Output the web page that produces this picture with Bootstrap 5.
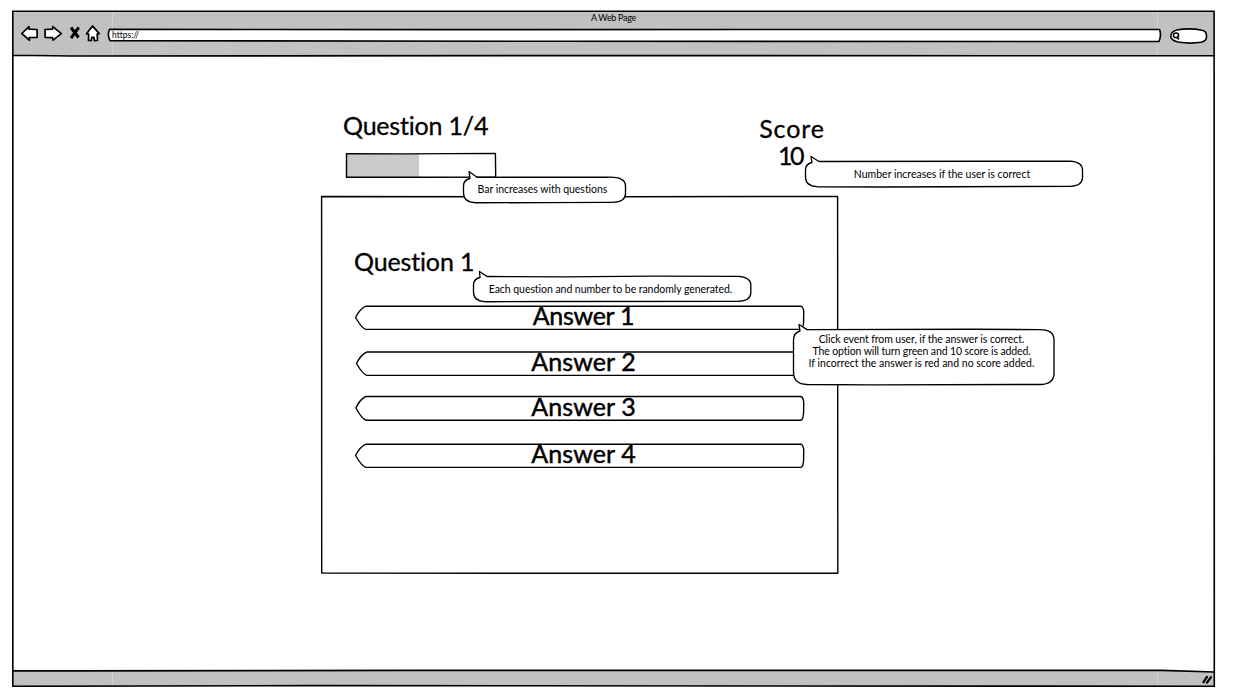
<!DOCTYPE html>
<html lang="en">
<head>
<meta charset="utf-8">
<meta name="viewport" content="width=device-width, initial-scale=1">
<title>A Web Page</title>
<link href="https://cdn.jsdelivr.net/npm/bootstrap@5.3.0/dist/css/bootstrap.min.css" rel="stylesheet">
<style>
body{font-family:Lato,"Open Sans",sans-serif;color:#000;background:#fff;overflow:hidden;font-variant-ligatures:none}
.browser{width:1203px;height:676px;margin:11px 0 0 12px}
.outline{position:absolute;left:0;top:0;overflow:visible;fill:none;stroke:#000;stroke-width:1.6;stroke-linejoin:round;stroke-linecap:round}
.fillw{fill:#fff}
.chrome-bar{height:45px}
.page-title{font-size:9px;line-height:14px;height:14px;letter-spacing:-.3px}
.tools{height:31px;padding:0 7px 0 9px}
.address{width:1054px;height:14px;font-size:8.5px;line-height:14px;padding-left:4px;margin:3px 0 0 7px}
.search{margin-top:2px}
.page-body{height:614px;padding:0 376px 0 309px}
.status{height:17px}
.quiz-head{height:140px}
.progress-side{padding:56px 0 0 22px}
.score-side{width:66px;margin-right:14px;padding-top:59px}
.big{font-size:25px;line-height:26px;white-space:nowrap;-webkit-text-stroke:.3px #000}
.q-count{letter-spacing:-.2px;height:28px}
.q-title{letter-spacing:-.15px;line-height:28px}
.score{letter-spacing:.9px;height:27px}
.score10{letter-spacing:-2.6px;padding-right:4px}
.bar-track{width:150px;height:25px;margin:13px 0 0 3px}
.panel{height:378px;width:517px;padding:51px 33px 0}
.answers{margin-top:30px}
.answer{width:449px;height:25px;font-size:25px;line-height:20px;margin-left:1px}
.answer>span{position:relative;left:4px;letter-spacing:.1px;-webkit-text-stroke:.45px #000}
.answer:first-child>span{letter-spacing:-.3px}
.note{position:absolute;font-size:10.5px;line-height:12px;text-align:center;white-space:nowrap;z-index:3}
.note>span{position:relative;display:block}
.note .outline{stroke-width:1.35;fill:#fff}
.n1{letter-spacing:-.03px}
.n3{letter-spacing:-.05px}
.n4{letter-spacing:-.08px}
.n5{letter-spacing:-.12px}
</style>
</head>
<body>
<div class="browser position-relative d-flex flex-column">
  <svg class="outline" width="1203" height="676">
    <path d="M.8.3H1202.4V45H.8ZM.8 660L60 659.5 1150 659.3 1202.4 661V675.3L300 674.8.8 675.3Z" fill="#c1c1c1" stroke="none"/>
    <path d="M100.5 1V44M1145.5 1V44M100.5 660V674M1145.5 660V674" stroke="#d0d0d0" stroke-width="1"/>
    <path d="M.8.3H1202.1L1202.3 675.3 300 674.6.8 675.3ZM.8 44.3L60 45 500 44.6 1202.4 44.8M.8 659.6L60 659.9 400 659.4 1150 659.4 1202.4 661"/>
  </svg>
  <header class="chrome-bar position-relative">
    <div class="page-title text-center">A Web Page</div>
    <div class="tools d-flex align-items-start">
      <svg width="80" height="22" viewBox="0 0 80 22" fill="#fff" stroke="#000" stroke-width="1.7" stroke-linejoin="round" stroke-linecap="round">
        <path d="M.8 8.5L8 1.6 8 4.2 16 4.5 16.2 12.3 8.3 12.5 8.5 15.3Z"/>
        <path d="M24 4.5L31.5 4.2 31.8 1.6 40.3 8.6 32 15.2 31.5 12.6 24.2 12.4Z"/>
        <path d="M50 2.5L57.5 12.5M57.8 2.3L50 13.2" stroke-width="3" stroke-linecap="butt"/>
        <path d="M71.5.9L78.2 8.6 76.2 9 76.5 15.5 73.4 15.7 73 12.3 70.7 12.3 70.3 15.7 67.5 15.5 67.7 9.2 65.5 8.8Z"/>
      </svg>
      <div class="address position-relative">
        <svg class="outline" width="1054" height="14"><path class="fillw" d="M1.5 1.4L350 1.6 1051.6 1.5Q1053.6 7.5 1051 13.5L450 13.3 2 12.7Q-1 7 1.5 1.4Z"/></svg>
        <span class="position-relative d-block">https://</span>
      </div>
      <svg class="search ms-auto" width="38" height="18" viewBox="0 3 38 18" fill="#fff" stroke="#000" stroke-width="1.6">
        <path d="M8 2.8Q20 .8 32 3.3 36.5 4 36.5 9 37 14 31 15.3 20 17 8 15 .5 13 .8 9 1 4 8 2.8Z" transform="translate(0 3)"/>
        <ellipse cx="6" cy="11.3" rx="2.6" ry="2.4" stroke-width="1.5"/><path d="M7 12.8L9 15.5"/>
      </svg>
    </div>
  </header>

  <main class="page-body position-relative">
    <div class="quiz-head position-relative d-flex justify-content-between">
      <div class="progress-side">
        <div class="big q-count">Question 1/4</div>
        <div class="bar-track position-relative">
          <svg class="outline" width="150" height="25"><path d="M.5 1H73V24H.5Z" fill="#cacaca" stroke="none"/><path stroke-width="1.4" d="M.5.6L60 .9 149.4.4 149.7 24 80 24.2.5 24.2Z"/></svg>
          <div class="note" style="left:117px;top:24px;width:163px;padding-top:6px;padding-right:4px">
            <svg class="outline" width="163" height="26"><path d="M14 .3L110 .2 145 .2Q162.5-.5 162.5 9V17Q162 25 150 25.3L80 25.7 12 25.7Q.5 25 .5 16V9Q.5 3 7 1.5L6-5.5Z"/></svg>
            <span class="n1">Bar increases with questions</span>
          </div>
        </div>
      </div>
      <div class="score-side text-center position-relative">
        <div class="big score">Score</div>
        <div class="big score10">10</div>
        <div class="note" style="left:46px;top:105px;width:278px;padding-top:7px;padding-right:4px">
          <svg class="outline" width="278" height="26"><path d="M14 .5L180 .2 265 .2Q277.5 1 277.5 9V17Q277 25 265 25.3L80 26 12 25.7Q.5 25 .5 16V9Q.5 3 7 1.5L6-4.5Z"/></svg>
          <span>Number increases if the user is correct</span>
        </div>
      </div>
    </div>

    <section class="panel position-relative">
      <svg class="outline" width="517" height="378"><path stroke-width="1.4" d="M.6.5L300 .8 516.6.4 516.8 377.3 250 377.3.7 377Z"/></svg>
      <div class="big position-relative d-inline-block align-top q-title">Question 1</div>
      <div class="note" style="left:152px;top:80px;width:278px;padding-top:7px;padding-right:3px">
        <svg class="outline" width="278" height="26"><path d="M14 .5L90 .9 180 .1 265 .3Q277.8 1 277.8 9V17Q277.5 25 265 25.3L80 25.5 12 25.7Q.5 25 .5 16V9Q.5 3 7 1.5L6.5-4.5Z"/></svg>
        <span class="n3">Each question and number to be randomly generated.</span>
      </div>
      <div class="answers">
        <div class="answer position-relative text-center" style="margin-bottom:21px">
          <svg class="outline" width="449" height="25"><path stroke-width="1.4" d="M11 1.2H446Q449.5 2.7 448.6 12 449 23.7 446 24.4H11Q7 23.7 .6 12.5 5 3.7 11 1.2Z"/></svg>
          <span>Answer 1</span>
          <div class="note" style="left:438px;top:24px;width:261px;padding-top:4px;padding-right:4px">
            <svg class="outline" width="261" height="56"><path d="M14 .6L180 .2 245 .6Q261 0 261 11V45Q260.5 55.2 247 55.5L80 55.8 14 55.5Q.5 55 .5 43V11Q.5 4 7 2L6-4.5Z"/></svg>
            <span class="n4">Click event from user, if the answer is correct.</span>
            <span class="n5">The option will turn green and 10 score is added.</span>
            <span>If incorrect the answer is red and no score added.</span>
          </div>
        </div>
        <div class="answer position-relative text-center" style="margin-bottom:20px">
          <svg class="outline" width="449" height="25"><path stroke-width="1.4" d="M12 1H446Q449.5 2.5 448.6 12 449 23.5 446 24.4H12Q8 23.5 1.4 12.5 6 3.5 12 1Z"/></svg>
          <span>Answer 2</span>
        </div>
        <div class="answer position-relative text-center" style="margin-bottom:22px">
          <svg class="outline" width="449" height="25"><path stroke-width="1.4" d="M11 .5H446Q449.5 2 448.6 12 449 23 446 24.2H11Q7 23 .9 12 5 3 11 .5Z"/></svg>
          <span>Answer 3</span>
        </div>
        <div class="answer position-relative text-center">
          <svg class="outline" width="449" height="25"><path stroke-width="1.4" d="M11 1.2H446Q449.5 2.7 448.6 12 449 23.7 446 24.4H11Q7 23.7 .6 12.5 5 3.7 11 1.2Z"/></svg>
          <span>Answer 4</span>
        </div>
      </div>
    </section>
  </main>
  <footer class="status position-relative d-flex justify-content-end align-items-center">
    <svg width="14" height="10" stroke="#000" stroke-width="2.2" stroke-linecap="round"><path d="M2.5 8.2L6 2.9M6 8.7L10 3.2"/></svg>
  </footer>
</div>
<script src="https://cdn.jsdelivr.net/npm/bootstrap@5.3.0/dist/js/bootstrap.bundle.min.js"></script>
</body>
</html>
